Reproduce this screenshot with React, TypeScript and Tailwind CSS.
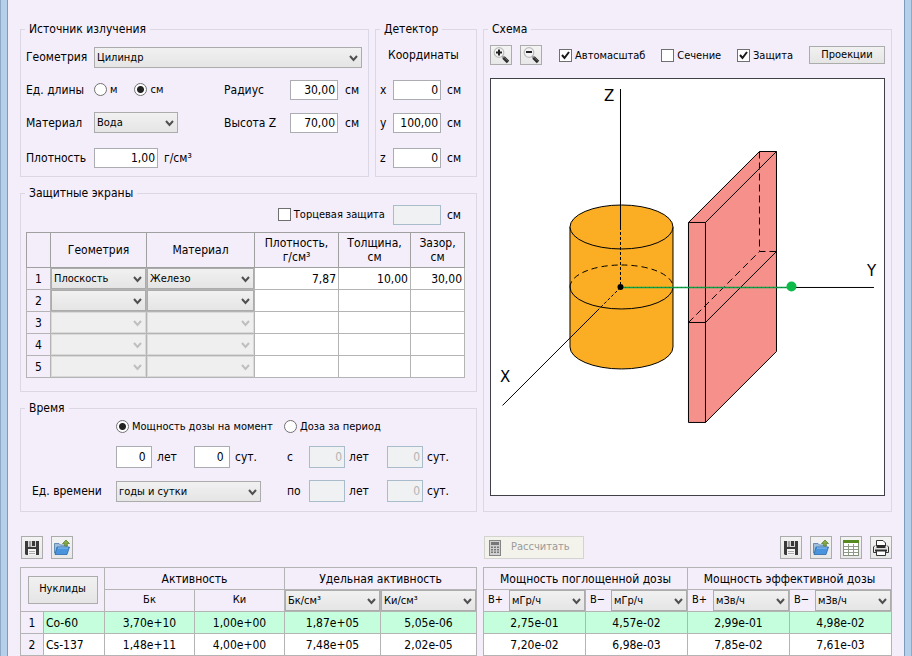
import React from 'react';

interface SelectProps {
  label: string;
  options: string[];
  disabled?: boolean;
  className?: string;
}

const Select: React.FC<SelectProps> = ({ label, options, disabled, className = '' }) => (
  <div className={`relative ${className}`}>
    <select
      aria-label={label}
      disabled={disabled}
      className="block h-[21px] w-full appearance-none border border-[#acacac] bg-linear-to-b from-[#f1f1f1] to-[#e5e5e5] pl-0.5 pr-4 pt-px text-[11px] leading-4 text-black outline-none disabled:border-[#d9d9d9] disabled:from-[#efefef] disabled:to-[#efefef]"
    >
      {options.map(o => <option key={o}>{o}</option>)}
    </select>
    <svg
      viewBox="0 0 9 7"
      className={`pointer-events-none absolute right-1 top-[8px] h-[7px] w-[9px] ${disabled ? 'text-[#bfbfbf]' : 'text-[#505050]'}`}
    >
      <path d="M1 1 L4.500 5 L8 1" fill="none" stroke="currentColor" strokeWidth="2" />
    </svg>
  </div>
);

interface NumberInputProps {
  label: string;
  value?: string;
  disabled?: boolean;
  className?: string;
}

const NumberInput: React.FC<NumberInputProps> = ({ label, value = '', disabled, className = 'h-5 w-12' }) => (
  <input
    aria-label={label}
    defaultValue={value}
    disabled={disabled}
    className={`border border-[#abadb3] bg-white pr-0.5 text-right text-xs outline-none disabled:border-[#a9bccb] disabled:bg-[#f0f1f3] disabled:text-[#b4b4b4] ${className}`}
  />
);

const Radio: React.FC<{ name: string; label: string; checked?: boolean }> = ({ name, label, checked }) => (
  <label className="flex items-center gap-[3px] whitespace-nowrap text-[11px]">
    <input
      type="radio"
      name={name}
      defaultChecked={checked}
      className="size-[13px] appearance-none rounded-full border border-[#707070] bg-white checked:bg-[radial-gradient(#222222_3px,#ffffff_4px)]"
    />
    <span className="pt-0.5">{label}</span>
  </label>
);

const Checkbox: React.FC<{ label: string; checked?: boolean }> = ({ label, checked }) => (
  <label className="flex items-center gap-[3px] whitespace-nowrap text-[11px]">
    <span className="grid size-[13px]">
      <input
        type="checkbox"
        defaultChecked={checked}
        className="peer col-start-1 row-start-1 size-[13px] appearance-none border border-[#707070] bg-white"
      />
      <svg viewBox="0 0 13 13" className="pointer-events-none invisible col-start-1 row-start-1 size-[13px] peer-checked:visible">
        <path d="M3 6 L5.500 9 L10 3" fill="none" stroke="#1a1a1a" strokeWidth="2" />
      </svg>
    </span>
    <span className="pt-0.5">{label}</span>
  </label>
);

const Group: React.FC<{ title: string; className?: string; children: React.ReactNode }> = ({ title, className = '', children }) => (
  <fieldset className={`min-w-0 border border-[#dcd7e4] ${className}`}>
    <legend className="ml-1 px-1 leading-4">{title}</legend>
    {children}
  </fieldset>
);

const IconButton: React.FC<{ label: string; className?: string; children: React.ReactNode }> = ({ label, className = 'h-[23px]', children }) => (
  <button
    type="button"
    aria-label={label}
    className={`flex w-[22px] items-center justify-center border border-[#acacac] bg-linear-to-b from-[#f3f3f3] to-[#e8e8e8] ${className}`}
  >
    {children}
  </button>
);

const ZoomIcon = ({ plus }: { plus?: boolean }) => (
  <svg viewBox="0 0 18 18" className="size-[18px]">
    <path d="M10 10 L11.500 11.500" stroke="#8c8c8c" strokeWidth="2" />
    <path d="M11.500 11.500 L16 16" stroke="#2c2c2c" strokeWidth="3.400" />
    <path d="M12 11.200 L15.500 14.700" stroke="#8a8a8a" strokeWidth="0.700" />
    <circle cx="7" cy="6.500" r="4.800" fill="#f4f4f4" stroke="#bcbcbc" strokeWidth="1.200" />
    <path d={plus ? 'M4 6.500 H10 M7 3.500 V9.500' : 'M4 6 H10'} stroke="#222" strokeWidth="2" />
  </svg>
);

const SaveIcon = () => (
  <svg viewBox="0 0 16 16" className="size-4">
    <path d="M1 1 H15 V15 H2 L1 14 Z" fill="#3a3a3a" />
    <rect x="4" y="1" width="8" height="6" fill="#d8d8d8" />
    <rect x="5" y="1" width="2" height="6" fill="#a0a0a0" />
    <rect x="8" y="1" width="3" height="5" fill="#3a3a3a" />
    <rect x="4" y="9" width="8" height="6" fill="#f4f4f4" />
    <path d="M5 11.500 H11 M5 13.500 H11" stroke="#aaa" />
  </svg>
);

const OpenIcon = () => (
  <svg viewBox="0 0 18 18" className="size-[18px]">
    <path d="M1.500 4.500 H6 L7.500 6 H14 V14 H1.500 Z" fill="#9dbddb" stroke="#4d7ba8" strokeWidth="0.800" />
    <path d="M4 8 H16.500 L14 15.500 H2 Z" fill="#4a94dd" stroke="#2a69ab" strokeWidth="0.800" />
    <path d="M5 9 H15" stroke="#8cc3f5" />
    <path d="M13 1 L16.500 4.500 H14.300 V7 H11.700 V4.500 H9.500 Z" fill="#84ab45" stroke="#55782a" strokeWidth="0.700" />
  </svg>
);

const SheetIcon = () => (
  <svg viewBox="0 0 16 16" className="size-4">
    <rect x="0.500" y="0.500" width="15" height="15" fill="#fff" stroke="#83907c" />
    <rect x="0" y="0" width="16" height="3" fill="#548a1f" />
    <path d="M1 6.500 H15 M1 9.500 H15 M1 12.500 H15 M5.500 4 V15 M10.500 4 V15" stroke="#8f9b89" />
  </svg>
);

const PrintIcon = () => (
  <svg viewBox="0 0 18 18" className="size-[18px]">
    <path d="M4.500 7 V1.500 H11 L13.500 4 V7" fill="#fff" stroke="#333" />
    <path d="M4.500 7.500 H13.500" stroke="#2b2b2b" strokeWidth="3" />
    <path d="M3 6.500 L1.500 8 V13.500 H4 M15 6.500 L16.500 8 V13.500 H14" fill="none" stroke="#333" />
    <path d="M3 9.500 H15" stroke="#ddd" />
    <path d="M3 11.500 H15" stroke="#2b2b2b" strokeWidth="2" />
    <path d="M4.500 12 H13.500 V16.500 H4.500 Z" fill="#fff" stroke="#333" />
  </svg>
);

const CalculatorIcon = () => (
  <svg viewBox="0 0 12 16" className="h-4 w-3">
    <rect x="0.500" y="0.500" width="11" height="15" fill="#d0d0d0" stroke="#858585" />
    <rect x="2" y="2" width="8" height="3" fill="#777" />
    <path d="M3 6.500 V14 M6 6.500 V14 M9 6.500 V14" stroke="#777" strokeWidth="2" strokeDasharray="1.600 0.900" />
  </svg>
);

// Source cylinder, shield slab and detector on the Y axis
const Scheme = () => (
  <svg viewBox="0 0 393 416" role="img" aria-label="Схема" className="block w-full" stroke="#000" fill="none">
    <path d="M79 148 V268 A51.500 22 0 0 0 182 268 V148 Z" fill="#fbae23" />
    <ellipse cx="130.500" cy="148" rx="51.500" ry="22" fill="#fbae23" />
    <path d="M79 208 A51.500 22 0 0 0 182 208" />
    <path d="M79 208 A51.500 22 0 0 1 182 208" strokeDasharray="6 4" />

    <path d="M197.500 143.500 L268.500 72.500 H285.500 V272.500 L214.500 343.500 H197.500 Z" fill="#f6908b" />
    <path d="M197.500 143.500 H214.500 V343.500 M214.500 143.500 L285.500 72.500" />
    <path d="M197.500 243.500 H214.500 L285.500 172.500" />
    <path d="M268.500 72.500 V172.500 H285.500 M197.500 243.500 L268.500 172.500" strokeDasharray="7 4" />

    <path d="M129.500 10 V148 M304 208.500 H383 M108 230 L11.500 326.500" />
    <path d="M129.500 148 V208 M129.500 208.500 L108 230" strokeDasharray="3 2" />
    <path d="M130 208.500 H298" stroke="#10a048" strokeWidth="1.500" />
    <path d="M130 208.500 H298" stroke="#0b7a34" strokeDasharray="1 3" />
    <circle cx="129.500" cy="208" r="3" fill="#000" stroke="none" />
    <circle cx="300.500" cy="207.500" r="5" fill="#0dbb4a" stroke="none" />

    <g fill="#000" stroke="none" className="font-['DejaVu_Sans'] text-[15px]">
      <text x="113" y="22">Z</text>
      <text x="376" y="197">Y</text>
      <text x="9" y="303">X</text>
    </g>
  </svg>
);

const shields = [
  { geometry: 'Плоскость', material: 'Железо', density: '7,87', thickness: '10,00', gap: '30,00' },
  { geometry: '', material: '', density: '', thickness: '', gap: '' },
  { geometry: '', material: '', density: '', thickness: '', gap: '', disabled: true },
  { geometry: '', material: '', density: '', thickness: '', gap: '', disabled: true },
  { geometry: '', material: '', density: '', thickness: '', gap: '', disabled: true },
];

const nuclides = [
  { name: 'Co-60', activity: ['3,70e+10', '1,00e+00', '1,87e+05', '5,05e-06'], dose: ['2,75e-01', '4,57e-02', '2,99e-01', '4,98e-02'] },
  { name: 'Cs-137', activity: ['1,48e+11', '4,00e+00', '7,48e+05', '2,02e-05'], dose: ['7,20e-02', '6,98e-03', '7,85e-02', '7,61e-03'] },
];

const doseUnits = [
  { sign: 'В+', unit: 'мГр/ч' },
  { sign: 'В−', unit: 'мГр/ч' },
  { sign: 'В+', unit: 'мЗв/ч' },
  { sign: 'В−', unit: 'мЗв/ч' },
];

const coordinates = [
  { axis: 'x', value: '0' },
  { axis: 'y', value: '100,00' },
  { axis: 'z', value: '0' },
];

const SourceGroup = () => (
  <Group title="Источник излучения" className="flex-1">
    <div className="pl-[5px] pr-1.5 pt-1">
      <div className="flex h-8 items-center">
        <span className="w-[68px]">Геометрия</span>
        <Select label="Геометрия" options={['Цилиндр']} className="flex-1" />
      </div>
      <div className="flex h-[33px] items-center">
        <span className="w-[68px]">Ед. длины</span>
        <div className="flex gap-[17px]">
          <Radio name="length" label="м" />
          <Radio name="length" label="см" checked />
        </div>
        <div className="ml-auto flex w-[138px] items-center">
          <span className="w-[66px]">Радиус</span>
          <NumberInput label="Радиус" value="30,00" />
          <span className="ml-[7px]">см</span>
        </div>
      </div>
      <div className="flex h-[33px] items-center">
        <span className="w-[68px]">Материал</span>
        <Select label="Материал" options={['Вода']} className="w-[84px]" />
        <div className="ml-auto flex w-[138px] items-center">
          <span className="w-[66px]">Высота Z</span>
          <NumberInput label="Высота Z" value="70,00" />
          <span className="ml-[7px]">см</span>
        </div>
      </div>
      <div className="flex h-[37px] items-center">
        <span className="w-[68px]">Плотность</span>
        <NumberInput label="Плотность" value="1,00" className="h-5 w-16" />
        <span className="ml-1.5">г/см³</span>
      </div>
    </div>
  </Group>
);

const DetectorGroup = () => (
  <Group title="Детектор" className="w-[102px]">
    <div className="pl-1 pt-1">
      <div className="flex h-8 items-center pl-2 pb-1">Координаты</div>
      {coordinates.map(c => (
        <div key={c.axis} className="flex h-[33px] items-center last:h-[37px]">
          <span className="w-[13px]">{c.axis}</span>
          <NumberInput label={c.axis} value={c.value} />
          <span className="ml-1.5">см</span>
        </div>
      ))}
    </div>
  </Group>
);

const ShieldsGroup = () => (
  <Group title="Защитные экраны">
    <div className="pb-[13px] pl-[5px] pr-[11px]">
      <div className="flex h-[31px] items-center justify-end pb-1 pr-1">
        <Checkbox label="Торцевая защита" />
        <NumberInput label="Торцевая защита, см" disabled className="ml-2 h-5 w-12" />
        <span className="ml-1.5">см</span>
      </div>
      <table className="w-full table-fixed border-collapse">
        <colgroup>
          <col className="w-[24px]" />
          <col className="w-[96px]" />
          <col className="w-[108px]" />
          <col className="w-[84px]" />
          <col className="w-[72px]" />
          <col className="w-[54px]" />
        </colgroup>
        <thead>
          <tr className="h-[35px] leading-[14px] *:border *:border-[#a0a0a0] *:p-0 *:font-normal">
            <th />
            <th>Геометрия</th>
            <th>Материал</th>
            <th>Плотность,<br />г/см³</th>
            <th>Толщина,<br />см</th>
            <th>Зазор,<br />см</th>
          </tr>
        </thead>
        <tbody>
          {shields.map((s, i) => (
            <tr key={i} className="h-[22px] *:border *:border-[#b4b4b4] *:p-0">
              <th className="font-normal">{i + 1}</th>
              <td><Select label={`Геометрия ${i + 1}`} options={[s.geometry]} disabled={s.disabled} /></td>
              <td><Select label={`Материал ${i + 1}`} options={[s.material]} disabled={s.disabled} /></td>
              <td className="bg-white text-right"><span className="pr-0.5">{s.density}</span></td>
              <td className="bg-white text-right"><span className="pr-0.5">{s.thickness}</span></td>
              <td className="bg-white text-right"><span className="pr-0.5">{s.gap}</span></td>
            </tr>
          ))}
        </tbody>
      </table>
    </div>
  </Group>
);

const TimeGroup = () => (
  <Group title="Время">
    <div className="pb-[3px] pl-[11px]">
      <div className="grid h-5 grid-cols-[84px_168px_1fr] items-center">
        <span />
        <Radio name="time" label="Мощность дозы на момент" checked />
        <Radio name="time" label="Доза за период" />
      </div>
      <div className="mt-1 grid h-[34px] grid-cols-[84px_78px_93px_22px_78px_1fr] items-center">
        <span />
        <div className="flex items-center gap-[5px]">
          <NumberInput label="Момент, лет" value="0 " className="h-[22px] w-9" />лет
        </div>
        <div className="flex items-center gap-[5px]">
          <NumberInput label="Момент, сут." value="0 " className="h-[22px] w-9" />сут.
        </div>
        <span>с</span>
        <div className="flex items-center gap-1">
          <NumberInput label="С, лет" value="0" disabled className="h-[22px] w-9" />лет
        </div>
        <div className="flex items-center gap-1">
          <NumberInput label="С, сут." value="0" disabled className="h-[22px] w-9" />сут.
        </div>
      </div>
      <div className="grid h-[34px] grid-cols-[84px_145px_26px_22px_78px_1fr] items-center">
        <span>Ед. времени</span>
        <Select label="Ед. времени" options={['годы и сутки']} />
        <span />
        <span>по</span>
        <div className="flex items-center gap-1">
          <NumberInput label="По, лет" disabled className="h-[22px] w-9" />лет
        </div>
        <div className="flex items-center gap-1">
          <NumberInput label="По, сут." value="0" disabled className="h-[22px] w-9" />сут.
        </div>
      </div>
    </div>
  </Group>
);

const SchemeGroup = () => (
  <Group title="Схема">
    <div className="px-1.5">
      <div className="mb-[5px] flex h-9 items-center">
        <div className="flex gap-2">
          <IconButton label="Увеличить" className="h-5"><ZoomIcon plus /></IconButton>
          <IconButton label="Уменьшить" className="h-5"><ZoomIcon /></IconButton>
        </div>
        <div className="flex flex-1 justify-between pl-[17px] pr-4">
          <Checkbox label="Автомасштаб" checked />
          <Checkbox label="Сечение" />
          <Checkbox label="Защита" checked />
        </div>
        <button type="button" className="h-[18px] w-[76px] border border-[#acacac] bg-linear-to-b from-[#f1f1f1] to-[#e5e5e5] text-[11px] leading-4">
          Проекции
        </button>
      </div>
      <div className="border border-[#404048] bg-white">
        <Scheme />
      </div>
    </div>
  </Group>
);

const ActivityTable = () => (
  <table className="w-full table-fixed border-collapse">
    <colgroup>
      <col className="w-[23px]" />
      <col className="w-[61px]" />
      <col className="w-[90px]" />
      <col className="w-[90px]" />
      <col className="w-[96px]" />
      <col className="w-[96px]" />
    </colgroup>
    <thead>
      <tr className="h-[22px] *:border *:border-[#b4b4b4] *:p-0 *:font-normal">
        <th colSpan={2} rowSpan={2}>
          <button type="button" className="h-7 w-[70px] border border-[#acacac] bg-linear-to-b from-[#f1f1f1] to-[#e5e5e5] text-[11px]">
            Нуклиды
          </button>
        </th>
        <th colSpan={2}>Активность</th>
        <th colSpan={2}>Удельная активность</th>
      </tr>
      <tr className="h-[22px] *:border *:border-[#b4b4b4] *:p-0 *:font-normal">
        <th className="text-[11px]">Бк</th>
        <th className="text-[11px]">Ки</th>
        <th><Select label="Единица Бк" options={['Бк/см³']} /></th>
        <th><Select label="Единица Ки" options={['Ки/см³']} /></th>
      </tr>
    </thead>
    <tbody>
      {nuclides.map((n, i) => (
        <tr key={n.name} className="h-[22px] bg-white text-center first:bg-[#c4fedc] *:border *:border-[#b4b4b4] *:p-0">
          <th className="bg-[#f4eefb] font-normal">{i + 1}</th>
          <td className="text-left"><span className="pl-0.5">{n.name}</span></td>
          {n.activity.map(v => <td key={v}>{v}</td>)}
        </tr>
      ))}
    </tbody>
  </table>
);

const DoseTable = () => (
  <table className="w-full table-fixed border-collapse">
    <thead>
      <tr className="h-[22px] *:border *:border-[#b4b4b4] *:p-0 *:font-normal">
        <th colSpan={2}>Мощность поглощенной дозы</th>
        <th colSpan={2}>Мощность эффективной дозы</th>
      </tr>
      <tr className="h-[22px] *:border *:border-[#b4b4b4] *:p-0 *:font-normal">
        {doseUnits.map((u, i) => (
          <th key={i}>
            <div className="flex items-center pl-1 text-[11px]">
              <span className="w-[21px] text-left">{u.sign}</span>
              <Select label={`Единица ${u.sign}`} options={[u.unit]} className="flex-1" />
            </div>
          </th>
        ))}
      </tr>
    </thead>
    <tbody>
      {nuclides.map(n => (
        <tr key={n.name} className="h-[22px] bg-white text-center first:bg-[#c4fedc] *:border *:border-[#b4b4b4] *:p-0">
          {n.dose.map(v => <td key={v}>{v}</td>)}
        </tr>
      ))}
    </tbody>
  </table>
);

export default function App() {
  return (
    <div className="min-h-screen border-x border-[#8fa9c4] bg-[#b5d0ea] px-1.5 font-['DejaVu_Sans_Condensed','DejaVu_Sans',sans-serif] text-xs text-black">
      <main className="min-h-screen border-x border-[#7d9cba] bg-[#f4eefb] px-3 pt-[21px]">
        <div className="grid grid-cols-[457fr_409fr] gap-x-1.5">
          <div className="flex flex-col gap-2">
            <div className="flex gap-1.5">
              <SourceGroup />
              <DetectorGroup />
            </div>
            <ShieldsGroup />
            <TimeGroup />
          </div>
          <SchemeGroup />

          <div className="mt-6 mb-2 flex gap-2 pl-px">
            <IconButton label="Сохранить нуклиды"><SaveIcon /></IconButton>
            <IconButton label="Открыть нуклиды"><OpenIcon /></IconButton>
          </div>
          <div className="mt-6 mb-2 flex items-center gap-2 pl-px">
            <button type="button" disabled className="mr-auto flex h-[23px] w-[100px] items-center gap-2.5 border border-[#d3d3cf] bg-[#f3f3ec] pl-1 text-[11px] text-[#9a9a9a]">
              <CalculatorIcon />
              Рассчитать
            </button>
            <IconButton label="Сохранить"><SaveIcon /></IconButton>
            <IconButton label="Открыть"><OpenIcon /></IconButton>
            <IconButton label="Таблица"><SheetIcon /></IconButton>
            <IconButton label="Печать"><PrintIcon /></IconButton>
          </div>

          <ActivityTable />
          <DoseTable />
        </div>
      </main>
    </div>
  );
}
